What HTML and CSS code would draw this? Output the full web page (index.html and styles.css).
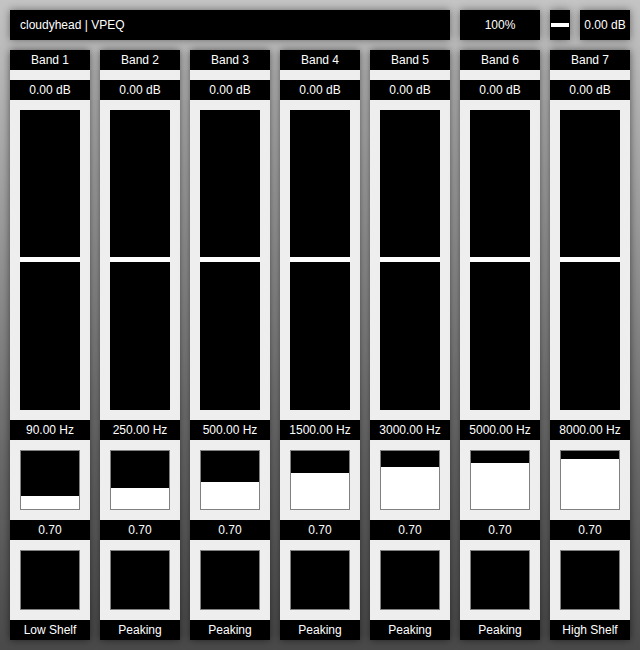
FILE: index.html
```html
<!DOCTYPE html>
<html>
<head>
<meta charset="utf-8">
<link rel="stylesheet" href="styles.css">
</head>
<body>
<div class="app">
  <div class="topbar">
    <div class="box title">cloudyhead | VPEQ</div>
    <div class="box zoom">100%</div>
    <div class="box toggle"><span class="dash"></span></div>
    <div class="box gain">0.00 dB</div>
  </div>
  <div class="bands">
    <div class="band">
      <div class="lbl">Band 1</div><div class="gap"></div><div class="lbl">0.00 dB</div>
      <div class="pad"><div class="slider"><span class="thumb"></span></div></div>
      <div class="lbl">90.00 Hz</div>
      <div class="pad"><div class="knob"><span class="fill" style="height:13px"></span></div></div>
      <div class="lbl">0.70</div>
      <div class="pad"><div class="knob"></div></div>
      <div class="lbl">Low Shelf</div>
    </div>
    <div class="band">
      <div class="lbl">Band 2</div><div class="gap"></div><div class="lbl">0.00 dB</div>
      <div class="pad"><div class="slider"><span class="thumb"></span></div></div>
      <div class="lbl">250.00 Hz</div>
      <div class="pad"><div class="knob"><span class="fill" style="height:21px"></span></div></div>
      <div class="lbl">0.70</div>
      <div class="pad"><div class="knob"></div></div>
      <div class="lbl">Peaking</div>
    </div>
    <div class="band">
      <div class="lbl">Band 3</div><div class="gap"></div><div class="lbl">0.00 dB</div>
      <div class="pad"><div class="slider"><span class="thumb"></span></div></div>
      <div class="lbl">500.00 Hz</div>
      <div class="pad"><div class="knob"><span class="fill" style="height:27px"></span></div></div>
      <div class="lbl">0.70</div>
      <div class="pad"><div class="knob"></div></div>
      <div class="lbl">Peaking</div>
    </div>
    <div class="band">
      <div class="lbl">Band 4</div><div class="gap"></div><div class="lbl">0.00 dB</div>
      <div class="pad"><div class="slider"><span class="thumb"></span></div></div>
      <div class="lbl">1500.00 Hz</div>
      <div class="pad"><div class="knob"><span class="fill" style="height:36px"></span></div></div>
      <div class="lbl">0.70</div>
      <div class="pad"><div class="knob"></div></div>
      <div class="lbl">Peaking</div>
    </div>
    <div class="band">
      <div class="lbl">Band 5</div><div class="gap"></div><div class="lbl">0.00 dB</div>
      <div class="pad"><div class="slider"><span class="thumb"></span></div></div>
      <div class="lbl">3000.00 Hz</div>
      <div class="pad"><div class="knob"><span class="fill" style="height:42px"></span></div></div>
      <div class="lbl">0.70</div>
      <div class="pad"><div class="knob"></div></div>
      <div class="lbl">Peaking</div>
    </div>
    <div class="band">
      <div class="lbl">Band 6</div><div class="gap"></div><div class="lbl">0.00 dB</div>
      <div class="pad"><div class="slider"><span class="thumb"></span></div></div>
      <div class="lbl">5000.00 Hz</div>
      <div class="pad"><div class="knob"><span class="fill" style="height:46px"></span></div></div>
      <div class="lbl">0.70</div>
      <div class="pad"><div class="knob"></div></div>
      <div class="lbl">Peaking</div>
    </div>
    <div class="band">
      <div class="lbl">Band 7</div><div class="gap"></div><div class="lbl">0.00 dB</div>
      <div class="pad"><div class="slider"><span class="thumb"></span></div></div>
      <div class="lbl">8000.00 Hz</div>
      <div class="pad"><div class="knob"><span class="fill" style="height:50px"></span></div></div>
      <div class="lbl">0.70</div>
      <div class="pad"><div class="knob"></div></div>
      <div class="lbl">High Shelf</div>
    </div>
  </div>
</div>
</body>
</html>
```
FILE: styles.css
```css
html, body {
  margin: 0;
  padding: 0;
}
body {
  width: 640px;
  height: 650px;
  overflow: hidden;
  background: linear-gradient(to bottom, #c4c4c4 0%, #9a9a9a 35%, #6a6a6a 70%, #4a4a4a 100%);
  font-family: "Liberation Sans", Arial, sans-serif;
  font-size: 12px;
  color: #fff;
}
.app {
  padding: 10px;
  display: flex;
  flex-direction: column;
  gap: 10px;
}
.topbar {
  display: flex;
  gap: 10px;
  height: 30px;
}
.box {
  background: #000;
  display: flex;
  align-items: center;
  justify-content: center;
  box-shadow: 0 0 8px rgba(0,0,0,0.45);
}
.title {
  width: 440px;
  justify-content: flex-start;
  padding-left: 10px;
  box-sizing: border-box;
}
.zoom { width: 80px; }
.toggle { width: 20px; }
.dash {
  display: block;
  width: 18px;
  height: 4px;
  background: #fff;
}
.gain { width: 50px; }
.bands {
  display: grid;
  grid-template-columns: repeat(7, 80px);
  column-gap: 10px;
}
.band {
  display: flex;
  flex-direction: column;
  background: #eee;
  box-shadow: 0 0 8px rgba(0,0,0,0.55);
}
.lbl {
  height: 20px;
  background: #000;
  display: flex;
  align-items: center;
  justify-content: center;
  white-space: nowrap;
}
.gap { height: 10px; }
.pad {
  padding: 10px;
}
.slider {
  position: relative;
  height: 300px;
  background: #000;
}
.thumb {
  position: absolute;
  left: 0;
  right: 0;
  top: 147px;
  height: 5px;
  background: #fff;
}
.knob {
  height: 60px;
  box-sizing: border-box;
  border: 1px solid #808080;
  background: #000;
  display: flex;
  flex-direction: column;
  justify-content: flex-end;
}
.fill {
  display: block;
  background: #fff;
}
```
